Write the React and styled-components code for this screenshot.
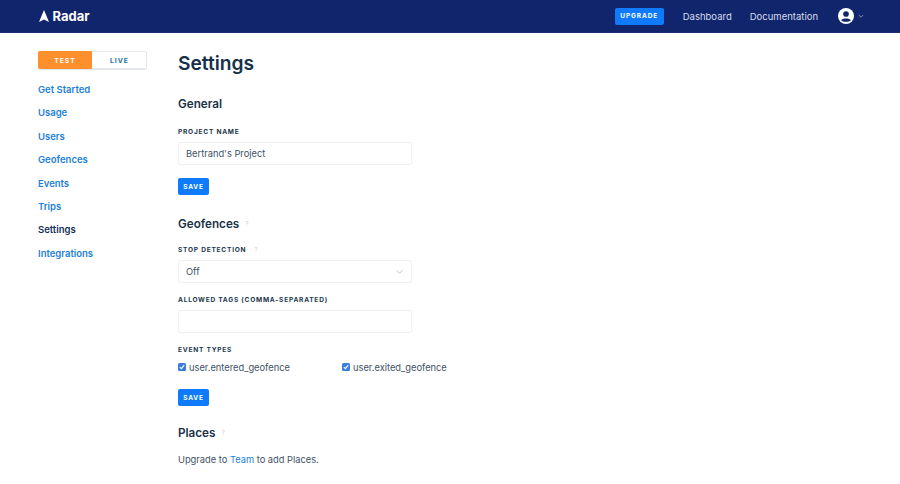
import React from "react";
import styled, { createGlobalStyle } from "styled-components";

const GlobalStyle = createGlobalStyle`
  html, body {
    margin: 0;
    padding: 0;
    background: #ffffff;
    font-family: "Inter", "Liberation Sans", sans-serif;
    overflow: hidden;
  }
`;

const Page = styled.div`
  width: 900px;
  height: 484px;
  overflow: hidden;
`;

const Header = styled.header`
  display: flex;
  align-items: center;
  box-sizing: border-box;
  height: 33px;
  padding: 0 36px 0 39px;
  background: #10256b;
  border-bottom: 1px solid #1c3070;
`;

const Brand = styled.div`
  display: flex;
  align-items: center;
  gap: 3.5px;
  color: #ffffff;
  font-size: 13px;
  font-weight: 700;
`;

const HeaderRight = styled.div`
  display: flex;
  align-items: center;
  margin-left: auto;
`;

const Upgrade = styled.div`
  display: flex;
  align-items: center;
  justify-content: center;
  width: 49px;
  height: 17px;
  margin-right: 19px;
  background: #0f7bfa;
  border-radius: 2px;
  color: #ffffff;
  font-size: 6.5px;
  font-weight: 700;
  letter-spacing: 0.9px;
`;

const HeaderLink = styled.div`
  margin-right: ${(p) => p.$gap}px;
  color: #d5dcef;
  font-size: 9.5px;
`;

const AvatarWrap = styled.div`
  display: flex;
  align-items: center;
  gap: 4px;
`;

const Body = styled.div`
  display: flex;
`;

const Sidebar = styled.aside`
  width: 109px;
  margin: 0 31px 0 38px;
  padding-top: 18px;
`;

const ModeSwitch = styled.div`
  display: flex;
  height: 18px;
  margin-bottom: 9px;
  border-radius: 2px;
  box-shadow: inset 0 0 0 1px #e4e8ec, 0 1px 1px #e0e4e9;
`;

const ModeOption = styled.div`
  flex: ${(p) => (p.$active ? "0 0 54px" : "1")};
  display: flex;
  align-items: center;
  justify-content: center;
  background: ${(p) => (p.$active ? "#fe8f2d" : "transparent")};
  color: ${(p) => (p.$active ? "#ffffff" : "#1a6fa8")};
  border-radius: ${(p) => (p.$active ? "2px 0 0 2px" : "0 2px 2px 0")};
  font-size: 6.8px;
  font-weight: 700;
  letter-spacing: 1px;
`;

const NavItem = styled.div`
  height: 23.4px;
  line-height: 23.4px;
  color: ${(p) => (p.$active ? "#14305a" : "#1d7fd6")};
  font-size: 9.5px;
  font-weight: 600;
`;

const Main = styled.main`
  flex: 1;
  padding-top: 17px;
`;

const Title = styled.h1`
  margin: 0 0 20px;
  height: 26px;
  line-height: 26px;
  color: #16304a;
  font-size: 19.2px;
  font-weight: 600;
`;

const SectionTitle = styled.h2`
  display: flex;
  align-items: center;
  gap: 6px;
  height: 16px;
  margin: 0 0 ${(p) => p.$after ?? 15}px;
  color: #1a3249;
  font-size: 11.7px;
  font-weight: 600;
`;

const Hint = styled.span`
  color: #cdd4da;
  font-size: 6.5px;
  font-weight: 400;
`;

const Label = styled.div`
  display: flex;
  align-items: center;
  gap: 8px;
  height: 10px;
  margin-bottom: ${(p) => p.$after ?? 5}px;
  color: #23384d;
  font-size: 6.6px;
  font-weight: 700;
  letter-spacing: 0.75px;
`;

const Field = styled.div`
  display: flex;
  align-items: center;
  justify-content: space-between;
  box-sizing: border-box;
  width: 234px;
  height: 23px;
  margin-bottom: ${(p) => p.$after ?? 12}px;
  padding: 0 7px;
  border: 1px solid #eff1f4;
  border-radius: 2px;
  color: #3f5264;
  font-size: 9.3px;
`;

const SaveButton = styled.div`
  display: flex;
  align-items: center;
  justify-content: center;
  width: 31px;
  height: 17px;
  margin-bottom: ${(p) => p.$after}px;
  background: #0f7bfa;
  border-radius: 2px;
  color: #ffffff;
  font-size: 6.5px;
  font-weight: 700;
  letter-spacing: 0.8px;
`;

const CheckRow = styled.div`
  display: flex;
  height: 14px;
  margin-bottom: 15px;
`;

const Check = styled.div`
  display: flex;
  align-items: center;
  gap: 3px;
  width: 164px;
  color: #3f5264;
  font-size: 9.3px;
`;

const CheckBox = styled.span`
  display: flex;
  align-items: center;
  justify-content: center;
  width: 8px;
  height: 8px;
  background: #3b7ddd;
  border-radius: 1.5px;
`;

const Note = styled.p`
  margin: 0;
  color: #3f5264;
  font-size: 9.3px;
`;

const TeamLink = styled.span`
  color: #1d7fd6;
`;

const Logo = () => (
  <svg width="10" height="12" viewBox="0 0 10 12">
    <path d="M5 0 L10 12 L5 9.6 L0 12 Z" fill="#ffffff" />
  </svg>
);

const Avatar = () => (
  <svg width="16" height="16" viewBox="0 0 17 17">
    <circle cx="8.5" cy="8.5" r="8.5" fill="#ffffff" />
    <circle cx="8.5" cy="6.4" r="3" fill="#10256b" />
    <path d="M3.4 13 C4.4 10.6 12.6 10.6 13.6 13 C12 15.2 5 15.2 3.4 13 Z" fill="#10256b" />
  </svg>
);

const Chevron = ({ size, color }) => (
  <svg width={size} height={size} viewBox="0 0 10 10" fill="none" stroke={color} strokeWidth="1">
    <path d="M1.5 3.5 L5 7 L8.5 3.5" />
  </svg>
);

const Tick = () => (
  <svg width="6" height="6" viewBox="0 0 6 6" fill="none" stroke="#ffffff" strokeWidth="1.1">
    <path d="M0.8 3.2 L2.4 4.7 L5.2 1.2" />
  </svg>
);

const navItems = ["Get Started", "Usage", "Users", "Geofences", "Events", "Trips", "Settings", "Integrations"];

export default function App() {
  return (
    <Page>
      <GlobalStyle />
      <Header>
        <Brand>
          <Logo />
          Radar
        </Brand>
        <HeaderRight>
          <Upgrade>UPGRADE</Upgrade>
          <HeaderLink $gap={18}>Dashboard</HeaderLink>
          <HeaderLink $gap={20}>Documentation</HeaderLink>
          <AvatarWrap>
            <Avatar />
            <Chevron size={6} color="#d5dcef" />
          </AvatarWrap>
        </HeaderRight>
      </Header>
      <Body>
        <Sidebar>
          <ModeSwitch>
            <ModeOption $active>TEST</ModeOption>
            <ModeOption>LIVE</ModeOption>
          </ModeSwitch>
          {navItems.map((item) => (
            <NavItem key={item} $active={item === "Settings"}>
              {item}
            </NavItem>
          ))}
        </Sidebar>
        <Main>
          <Title>Settings</Title>
          <SectionTitle>General</SectionTitle>
          <Label>PROJECT NAME</Label>
          <Field $after={13}>Bertrand's Project</Field>
          <SaveButton $after={21}>SAVE</SaveButton>
          <SectionTitle $after={13}>
            Geofences <Hint>?</Hint>
          </SectionTitle>
          <Label>
            STOP DETECTION <Hint>?</Hint>
          </Label>
          <Field>
            Off
            <Chevron size={9} color="#b9c2ca" />
          </Field>
          <Label>ALLOWED TAGS (COMMA-SEPARATED)</Label>
          <Field $after={12} />
          <Label $after={5}>EVENT TYPES</Label>
          <CheckRow>
            <Check>
              <CheckBox>
                <Tick />
              </CheckBox>
              user.entered_geofence
            </Check>
            <Check>
              <CheckBox>
                <Tick />
              </CheckBox>
              user.exited_geofence
            </Check>
          </CheckRow>
          <SaveButton $after={19}>SAVE</SaveButton>
          <SectionTitle $after={13}>
            Places <Hint>?</Hint>
          </SectionTitle>
          <Note>
            Upgrade to <TeamLink>Team</TeamLink> to add Places.
          </Note>
        </Main>
      </Body>
    </Page>
  );
}
